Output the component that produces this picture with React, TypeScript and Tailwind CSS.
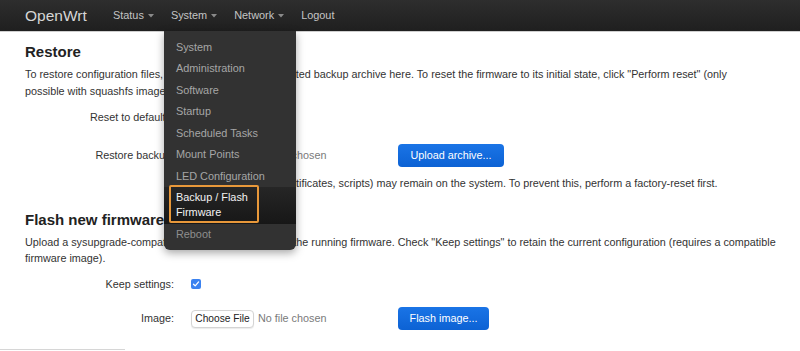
import React from "react";

function Caret() {
  return (
    <svg width="6" height="4" viewBox="0 0 6 4" className="ml-[4px] mt-[1px]">
      <path d="M0 0 L6 0 L3 3.5 Z" fill="#8a8a8a" />
    </svg>
  );
}

const menuItems = [
  "System",
  "Administration",
  "Software",
  "Startup",
  "Scheduled Tasks",
  "Mount Points",
  "LED Configuration",
];

function Dropdown() {
  return (
    <div className="absolute left-[-7px] top-full w-[132px] bg-[#323232] rounded-b-[6px] shadow-[0_3px_8px_rgba(0,0,0,0.35)] py-[5px] z-20">
      {menuItems.map((m) => (
        <div key={m} className="h-[21.5px] flex items-center pl-[12px] text-[10.9px] text-[#a6a6a6] whitespace-nowrap">
          {m}
        </div>
      ))}
      <div className="relative h-[37px] py-[3.5px] pl-[12px] bg-gradient-to-b from-[#262626] to-[#171717] text-[10.9px] leading-[15px] text-[#f2f2f2]">
        <div>Backup / Flash</div>
        <div>Firmware</div>
        <div className="absolute left-[5px] top-[-2px] w-[90px] h-[38px] border-2 border-[#e8983a] rounded-[2px]" />
      </div>
      <div className="h-[21.5px] flex items-center pl-[12px] text-[10.9px] text-[#8e8e8e]">Reboot</div>
    </div>
  );
}

function NavItem({ label, caret, children }: { label: string; caret?: boolean; children?: React.ReactNode }) {
  return (
    <div className="relative h-full flex items-center text-[10.9px] text-[#c4c4c4]">
      <span>{label}</span>
      {caret && <Caret />}
      {children}
    </div>
  );
}

function FileInput() {
  return (
    <div className="w-[207px] flex items-center">
      <div className="h-[18px] w-[63px] flex items-center justify-center bg-white border border-[#d4d4d4] rounded-[4px] shadow-[0_1px_1px_rgba(0,0,0,0.08)] text-[10.2px] text-[#222]">
        Choose File
      </div>
      <span className="ml-[4px] text-[10.8px] text-[#7a7a7a]">No file chosen</span>
    </div>
  );
}

function BlueButton({ label, w }: { label: string; w: string }) {
  return (
    <div className={`${w} h-[23px] flex items-center justify-center rounded-[4px] bg-gradient-to-b from-[#1a74e6] to-[#0c62d4] text-white text-[10.8px]`}>
      {label}
    </div>
  );
}

export default function App() {
  return (
    <div className="relative w-[800px] h-[351px] overflow-hidden bg-white font-['Liberation_Sans',Arial,sans-serif]">
      <header className="relative z-10 h-[31px] bg-gradient-to-b from-[#2e2e2e] to-[#1f1f1f] shadow-[0_1px_0_#cfcfcf] flex items-center pl-[25px]">
        <div className="text-[15.5px] text-[#d6d6d6] w-[88px]">OpenWrt</div>
        <nav className="h-full flex items-center gap-[17px] ml-0">
          <NavItem label="Status" caret />
          <NavItem label="System" caret>
            <Dropdown />
          </NavItem>
          <NavItem label="Network" caret />
          <NavItem label="Logout" />
        </nav>
      </header>

      <main className="pl-[25px] text-[10.8px] text-[#333]">
        <h2 className="mt-[12px] text-[15px] leading-[18px] font-bold text-[#222]">Restore</h2>
        <p className="mt-[5px] leading-[17px] whitespace-nowrap">
          To restore configuration files, upload a previously generated backup archive here. To reset the firmware to its initial state, click "Perform reset" (only
          <br />
          possible with squashfs images).
        </p>

        <div className="mt-[5.5px] h-[23px] flex items-center">
          <div className="w-[149px] text-right pr-0">Reset to defaults:</div>
          <div className="ml-[17px] w-[96px] h-[23px] flex items-center justify-center rounded-[4px] bg-[#c9302c] text-white">Perform reset</div>
        </div>

        <div className="mt-[15px] h-[23px] flex items-center">
          <div className="w-[149px] text-right">Restore backup:</div>
          <div className="ml-[17px] flex items-center">
            <FileInput />
            <BlueButton label="Upload archive..." w="w-[106px]" />
          </div>
        </div>

        <div className="mt-[8px] leading-[17px] pl-[190px] whitespace-nowrap">
          Custom files (certificates, scripts) may remain on the system. To prevent this, perform a factory-reset first.
        </div>

        <h2 className="mt-[19.5px] text-[15px] leading-[18px] font-bold text-[#222]">Flash new firmware</h2>
        <p className="mt-[4.75px] leading-[16.5px] whitespace-nowrap">
          Upload a sysupgrade-compatible image here to replace the running firmware. Check "Keep settings" to retain the current configuration (requires a compatible
          <br />
          firmware image).
        </p>

        <div className="mt-[5.75px] h-[23px] flex items-center">
          <div className="w-[149px] text-right">Keep settings:</div>
          <div className="ml-[17px] w-[10px] h-[10px] rounded-[2px] bg-[#3b82f0] flex items-center justify-center">
            <svg width="8" height="8" viewBox="0 0 8 8">
              <path d="M1.5 4.2 L3.2 5.9 L6.6 1.9" stroke="white" strokeWidth="1.3" fill="none" strokeLinecap="round" strokeLinejoin="round" />
            </svg>
          </div>
        </div>

        <div className="mt-[11.5px] h-[23px] flex items-center">
          <div className="w-[149px] text-right">Image:</div>
          <div className="ml-[17px] flex items-center">
            <FileInput />
            <BlueButton label="Flash image..." w="w-[91px]" />
          </div>
        </div>
      </main>

      <div className="mt-[18.5px] w-[125px] h-px bg-[#d6d6d6]" />
    </div>
  );
}
